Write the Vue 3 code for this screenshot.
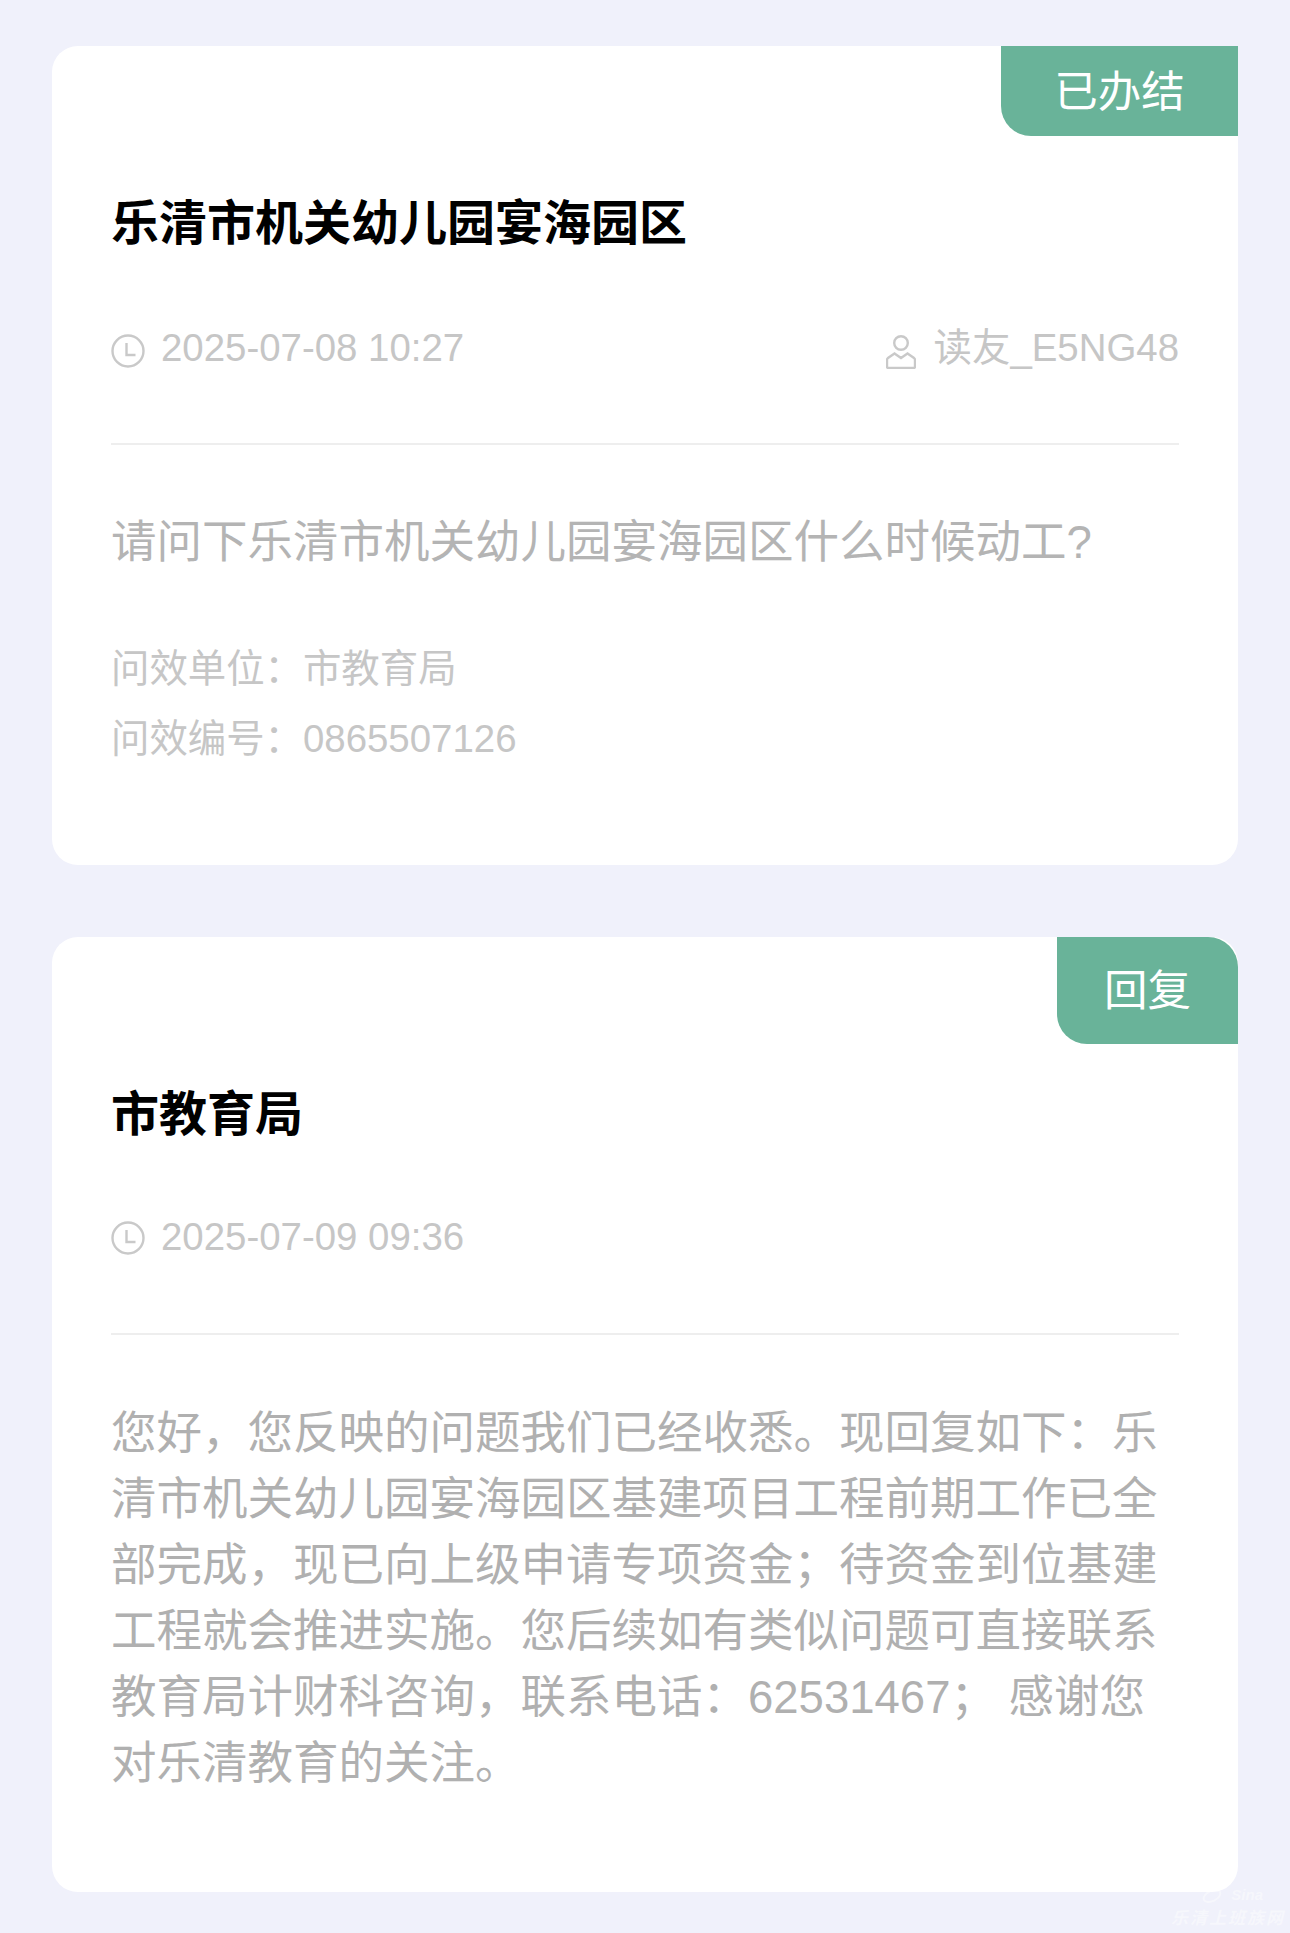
<script setup>
const item = {
  title: '乐清市机关幼儿园宴海园区',
  time: '2025-07-08 10:27',
  user: '读友_E5NG48',
  question: '请问下乐清市机关幼儿园宴海园区什么时候动工?',
  unit: '市教育局',
  code: '0865507126',
}

const reply = {
  title: '市教育局',
  time: '2025-07-09 09:36',
  lines: [
    '您好，您反映的问题我们已经收悉。现回复如下：乐',
    '清市机关幼儿园宴海园区基建项目工程前期工作已全',
    '部完成，现已向上级申请专项资金；待资金到位基建',
    '工程就会推进实施。您后续如有类似问题可直接联系',
    '教育局计财科咨询，联系电话：62531467； 感谢您',
    '对乐清教育的关注。',
  ],
}
</script>

<template>
  <div class="page">
    <section class="card">
      <div class="badge badge-done">已办结</div>
      <h2 class="title">{{ item.title }}</h2>
      <div class="meta">
        <span class="meta-item">
          <svg class="icon" viewBox="0 0 34 34" fill="none">
            <circle cx="17" cy="17" r="15.5" />
            <path d="M15.5 9V21H24.5" />
          </svg>
          {{ item.time }}
        </span>
        <span class="meta-item">
          <svg class="icon icon-user" viewBox="0 0 30 34" fill="none">
            <circle cx="15" cy="8" r="6.8" />
            <path d="M8.5 18.5L2 23Q1 24 1 25V31.5Q1 33 2.5 33H27.5Q29 33 29 31.5V25Q29 24 28 23L21.5 18.5L15 23Z" />
          </svg>
          {{ item.user }}
        </span>
      </div>
      <div class="divider"></div>
      <p class="question">{{ item.question }}</p>
      <div class="info">
        <p>问效单位：<span>{{ item.unit }}</span></p>
        <p>问效编号：<span>{{ item.code }}</span></p>
      </div>
    </section>

    <section class="card card-reply">
      <div class="badge badge-reply">回复</div>
      <h2 class="title">{{ reply.title }}</h2>
      <div class="meta">
        <span class="meta-item">
          <svg class="icon" viewBox="0 0 34 34" fill="none">
            <circle cx="17" cy="17" r="15.5" />
            <path d="M15.5 9V21H24.5" />
          </svg>
          {{ reply.time }}
        </span>
      </div>
      <div class="divider"></div>
      <div class="answer">
        <p v-for="line in reply.lines" :key="line">{{ line }}</p>
      </div>
    </section>

    <div class="watermark">
      <span class="mark-logo">
        <svg class="mark-swirl" viewBox="0 0 26 24" fill="none">
          <ellipse cx="11" cy="16" rx="9" ry="5" transform="rotate(-25 11 16)" />
          <path d="M6 6L10 10M13 3V9M20 5L16 10" />
        </svg>
        Sina
      </span>
      <span class="mark-name">乐清上班族网</span>
    </div>
  </div>
</template>

<style scoped>
.page {
  position: relative;
  box-sizing: border-box;
  width: 1290px;
  height: 1933px;
  padding: 46px 52px 0;
  background: #f0f1fb;
  overflow: hidden;
  font-family: "Liberation Sans", "Noto Sans CJK SC", sans-serif;
}

.card {
  position: relative;
  box-sizing: border-box;
  height: 819px;
  padding: 148px 59px 0;
  background: #fff;
  border-radius: 26px;
}

.card-reply {
  height: 955px;
  margin-top: 72px;
}

.badge {
  position: absolute;
  top: 0;
  right: 0;
  display: flex;
  align-items: center;
  justify-content: center;
  box-sizing: border-box;
  padding-bottom: 6px;
  background: #69b399;
  color: #fff;
  font-size: 43.5px;
}

.badge-done {
  width: 237px;
  height: 90px;
  border-bottom-left-radius: 30px;
}

.badge-reply {
  width: 181px;
  height: 107px;
  border-top-right-radius: 30px;
  border-bottom-left-radius: 30px;
}

.title {
  margin: 0;
  height: 60px;
  color: #000;
  font-size: 48px;
  line-height: 60px;
  font-weight: 700;
}

.meta {
  display: flex;
  justify-content: space-between;
  height: 48px;
  margin-top: 70px;
  color: #c6c6c6;
  font-size: 38.4px;
  line-height: 48px;
}

.card-reply .meta {
  margin-top: 68px;
}

.meta-item {
  display: flex;
  align-items: center;
  gap: 16px;
}

.icon {
  width: 34px;
  height: 34px;
  margin-top: 5px;
  stroke: #c9c9c9;
  stroke-width: 2.4;
}

.card-reply .icon {
  margin-top: 1px;
}

.icon-user {
  width: 30px;
  margin-top: 7px;
  margin-right: 2px;
}

.divider {
  height: 2px;
  margin-top: 71px;
  background: #eeeeee;
}

.card-reply .divider {
  margin-top: 72px;
}

.question {
  margin: 65px 0 0;
  color: #b4b4b4;
  font-size: 45.5px;
  line-height: 66px;
}

.info {
  margin-top: 58px;
  color: #c6c6c6;
  font-size: 38.4px;
  line-height: 70px;
}

.info p {
  margin: 0;
}

.answer {
  margin-top: 66px;
  color: #b0b0b0;
  font-size: 45.5px;
  line-height: 66px;
}

.answer p {
  margin: 0;
  white-space: nowrap;
}

.watermark {
  position: absolute;
  right: 5px;
  bottom: 5px;
  display: flex;
  flex-direction: column;
  align-items: flex-end;
  color: #fff;
  opacity: 0.45;
  font-style: italic;
  font-weight: 700;
}

.mark-logo {
  display: flex;
  align-items: flex-end;
  gap: 4px;
  margin-right: 22px;
  font-size: 15px;
  line-height: 18px;
}

.mark-swirl {
  width: 26px;
  height: 24px;
  stroke: #fff;
  stroke-width: 2;
}

.mark-name {
  margin-top: 6px;
  font-size: 17px;
  line-height: 18px;
  letter-spacing: 2px;
}
</style>
